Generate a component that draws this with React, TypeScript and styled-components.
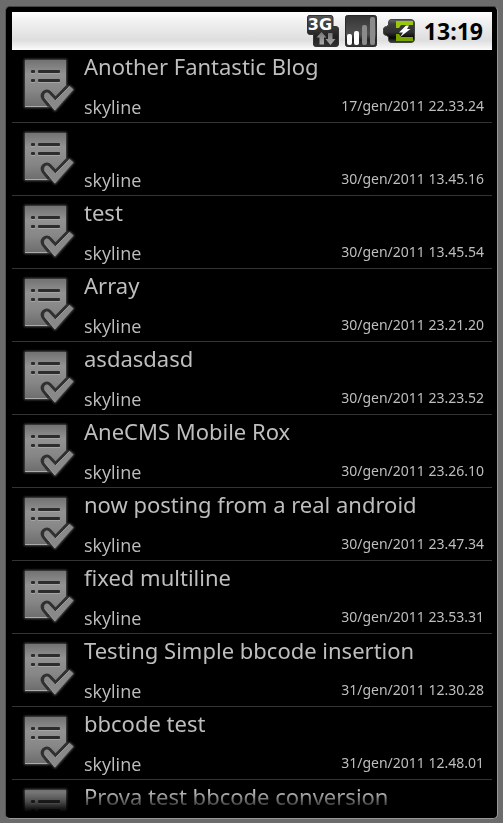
import React from "react";
import styled, { createGlobalStyle } from "styled-components";

const GlobalStyle = createGlobalStyle`
  * { box-sizing: border-box; }
  body {
    margin: 0;
    background: #6c6c6c;
    font-family: "Noto Sans", "Open Sans", sans-serif;
  }
`;

const Page = styled.div`
  height: 100vh;
  padding: 6px 5px 4px 5px;
`;

const Device = styled.main`
  display: flex;
  flex-direction: column;
  height: 100%;
  padding: 5px 5px 6px 6px;
  background: #000;
  border: 1px solid #999;
  border-top-color: #444;
  border-left-color: #555;
  border-radius: 5px;
`;

const StatusBar = styled.header`
  display: flex;
  flex: none;
  align-items: center;
  justify-content: flex-end;
  gap: 6px;
  height: 38px;
  padding: 0 9px 0 0;
  background: linear-gradient(#fff 0%, #f1f1f1 25%, #dedede 74%, #e4e4e4 80%, #fbfbfb 100%);
`;

const StatusIcon = styled.svg`
  display: block;
  width: 32px;
  height: 32px;
`;

const Clock = styled.time`
  margin-left: 3px;
  color: #000;
  font-family: "Open Sans", sans-serif;
  font-size: 23px;
  font-weight: 700;
  line-height: 32px;
`;

const PostList = styled.ul`
  flex: 1;
  min-height: 0;
  margin: 0;
  padding: 0;
  overflow-y: auto;
  scrollbar-width: none;
  list-style: none;
  mask-image: linear-gradient(to top, transparent 0, #000 20px);
`;

const PostRow = styled.li`
  display: grid;
  grid-template-columns: 56px 1fr;
  column-gap: 8px;
  height: 73px;
  padding: 0 8px;
  border-bottom: 1px solid #343434;
`;

const PostIcon = styled.svg`
  display: block;
  width: 56px;
  height: 60px;
  margin-top: 5px;
`;

const PostBody = styled.div`
  display: flex;
  flex-direction: column;
  justify-content: space-between;
  min-width: 0;
  color: #bebebe;
`;

const Title = styled.h2`
  height: 32px;
  margin: 0;
  overflow: hidden;
  font-size: 22px;
  font-weight: 400;
  line-height: 32px;
  white-space: nowrap;
`;

const Meta = styled.div`
  display: flex;
  align-items: flex-start;
  justify-content: space-between;
  height: 28px;
`;

const Author = styled.span`
  font-family: "Open Sans", sans-serif;
  font-size: 18px;
  line-height: 26px;
`;

const PostDate = styled.time`
  font-size: 14px;
  line-height: 24px;
`;

interface Post {
  title: string;
  author?: string;
  date?: string;
}

const posts: Post[] = [
  { title: "Another Fantastic Blog", author: "skyline", date: "17/gen/2011 22.33.24" },
  { title: "", author: "skyline", date: "30/gen/2011 13.45.16" },
  { title: "test", author: "skyline", date: "30/gen/2011 13.45.54" },
  { title: "Array", author: "skyline", date: "30/gen/2011 23.21.20" },
  { title: "asdasdasd", author: "skyline", date: "30/gen/2011 23.23.52" },
  { title: "AneCMS Mobile Rox", author: "skyline", date: "30/gen/2011 23.26.10" },
  { title: "now posting from a real android", author: "skyline", date: "30/gen/2011 23.47.34" },
  { title: "fixed multiline", author: "skyline", date: "30/gen/2011 23.53.31" },
  { title: "Testing Simple bbcode insertion", author: "skyline", date: "31/gen/2011 12.30.28" },
  { title: "bbcode test", author: "skyline", date: "31/gen/2011 12.48.01" },
  { title: "Prova test bbcode conversion" },
];

const CHECK = "M24.500 42.500Q23.500 40 25 38.500Q27 36.500 29 38.500L35.500 45.500L49.500 31L53.500 34.500L35 55.500Z";
const PAPER = "M5 5H46V31L35.500 42L29 35L22 39L29 52H5Z";

function NoteIcon({ id }: { id: string }) {
  return (
    <PostIcon viewBox="0 0 56 60" aria-hidden="true">
      <defs>
        <linearGradient id={`paper-${id}`} x1="0" y1="0" x2="0" y2="1">
          <stop offset="0" stopColor="#727272" />
          <stop offset="0.3" stopColor="#929292" />
          <stop offset="0.65" stopColor="#868686" />
          <stop offset="1" stopColor="#6c6c6c" />
        </linearGradient>
        <filter id={`glow-${id}`} x="-20%" y="-20%" width="140%" height="140%">
          <feGaussianBlur stdDeviation="1.2" />
        </filter>
      </defs>
      <g filter={`url(#glow-${id})`} fill="#555" stroke="#606060" strokeWidth="1.500">
        <path d={PAPER} />
        <path d={CHECK} />
      </g>
      <path d={PAPER} fill={`url(#paper-${id})`} />
      <path d="M5 51.500H28" stroke="#aaa" />
      <g fill="#2b2d2b">
        <rect x="11" y="15" width="4" height="3" rx="1" />
        <rect x="18" y="15" width="22" height="3" rx="1" />
        <rect x="11" y="24" width="4" height="3" rx="1" />
        <rect x="18" y="24" width="22" height="3" rx="1" />
      </g>
      <path d="M11 18.500H15M18 18.500H40M11 27.500H15M18 27.500H40" stroke="#a5a5a5" />
      <path
        d="M29 51L23 43.500Q21 40 23.500 37.500Q27 34.500 30 37.500L35.500 43.500L47 31.500"
        fill="none"
        stroke="#303030"
        strokeWidth="3"
        strokeLinejoin="round"
      />
      <path d={CHECK} fill="#898989" />
      <path d="M35.500 45.500L49.500 31.500M24.500 42.500L35 55" fill="none" stroke="#999" />
    </PostIcon>
  );
}

function NetworkIcon() {
  return (
    <StatusIcon viewBox="0 0 32 32" role="img" aria-label="3G data">
      <defs>
        <linearGradient id="network-fill" x1="0" y1="0" x2="0" y2="1">
          <stop offset="0" stopColor="#555" />
          <stop offset="0.7" stopColor="#202020" />
          <stop offset="1" stopColor="#333" />
        </linearGradient>
        <linearGradient id="network-arrows" x1="0" y1="0" x2="0" y2="1">
          <stop offset="0" stopColor="#777" />
          <stop offset="1" stopColor="#aaa" />
        </linearGradient>
      </defs>
      <path
        d="M2 0.500H24Q26 0.500 26 3V11.500H29Q31.500 11.500 31.500 14V29Q31.500 31.500 29 31.500H8.500Q6.500 31.500 6.500 29V19.500H3Q0.500 19.500 0.500 17V3Q0.500 0.500 2 0.500Z"
        fill="url(#network-fill)"
        stroke="#333"
      />
      <text
        x="13"
        y="15"
        textAnchor="middle"
        fill="#fff"
        fontFamily="DejaVu Sans, sans-serif"
        fontSize="16"
        fontWeight="700"
      >
        3G
      </text>
      <g fill="url(#network-arrows)">
        <path d="M14.500 17L19.500 22.500H17V29.500H12.500V22.500H9.500Z" />
        <path d="M21 18H25.500V24H28.500L23.500 30L18.500 24H21Z" />
      </g>
    </StatusIcon>
  );
}

function SignalIcon() {
  return (
    <StatusIcon viewBox="0 0 32 32" role="img" aria-label="Signal strength">
      <defs>
        <linearGradient id="signal-fill" x1="0" y1="0" x2="0" y2="1">
          <stop offset="0" stopColor="#353535" />
          <stop offset="0.6" stopColor="#505050" />
          <stop offset="0.8" stopColor="#222" />
          <stop offset="1" stopColor="#3a3a3a" />
        </linearGradient>
      </defs>
      <rect x="0.500" y="0.500" width="31" height="31" rx="2" fill="url(#signal-fill)" stroke="#2b2b2b" />
      <rect x="2" y="19" width="5" height="11" rx="2" fill="#fff" />
      <rect x="9" y="16" width="5" height="14" rx="2" fill="#fff" />
      <rect x="17" y="10" width="5" height="20" rx="2" fill="#8b8b8b" />
      <rect x="25" y="2" width="5" height="28" rx="2" fill="#8b8b8b" />
    </StatusIcon>
  );
}

function BatteryIcon() {
  return (
    <StatusIcon viewBox="0 0 32 32" role="img" aria-label="Battery charging">
      <defs>
        <linearGradient id="battery-fill" x1="0" y1="0" x2="0" y2="1">
          <stop offset="0" stopColor="#666" />
          <stop offset="0.2" stopColor="#3d3d3d" />
          <stop offset="0.55" stopColor="#303030" />
          <stop offset="0.8" stopColor="#050505" />
          <stop offset="1" stopColor="#444" />
        </linearGradient>
      </defs>
      <path
        d="M8 4.500H28Q31.500 4.500 31.500 8V24Q31.500 27.500 28 27.500H8Q5.500 27.500 5.500 24V22L3.500 20.500Q0.500 20 0.500 18V14Q0.500 12 3.500 11.500L5.500 10V8Q5.500 4.500 8 4.500Z"
        fill="url(#battery-fill)"
        stroke="#444"
      />
      <path d="M13 6H30V10H18L16 13H13Z" fill="#99c80a" />
      <path d="M13 26H30V22H18L16 19H13Z" fill="#79a500" />
      <path d="M23 10.500H26L24 14H27.500L17 22L20 17.500H16Z" fill="#fff" />
    </StatusIcon>
  );
}

export default function App() {
  return (
    <>
      <GlobalStyle />
      <Page>
        <Device>
          <StatusBar>
            <NetworkIcon />
            <SignalIcon />
            <BatteryIcon />
            <Clock>13:19</Clock>
          </StatusBar>
          <PostList>
            {posts.map((post, index) => (
              <PostRow key={index}>
                <NoteIcon id={String(index)} />
                <PostBody>
                  <Title>{post.title}</Title>
                  {post.author && (
                    <Meta>
                      <Author>{post.author}</Author>
                      <PostDate>{post.date}</PostDate>
                    </Meta>
                  )}
                </PostBody>
              </PostRow>
            ))}
          </PostList>
        </Device>
      </Page>
    </>
  );
}
